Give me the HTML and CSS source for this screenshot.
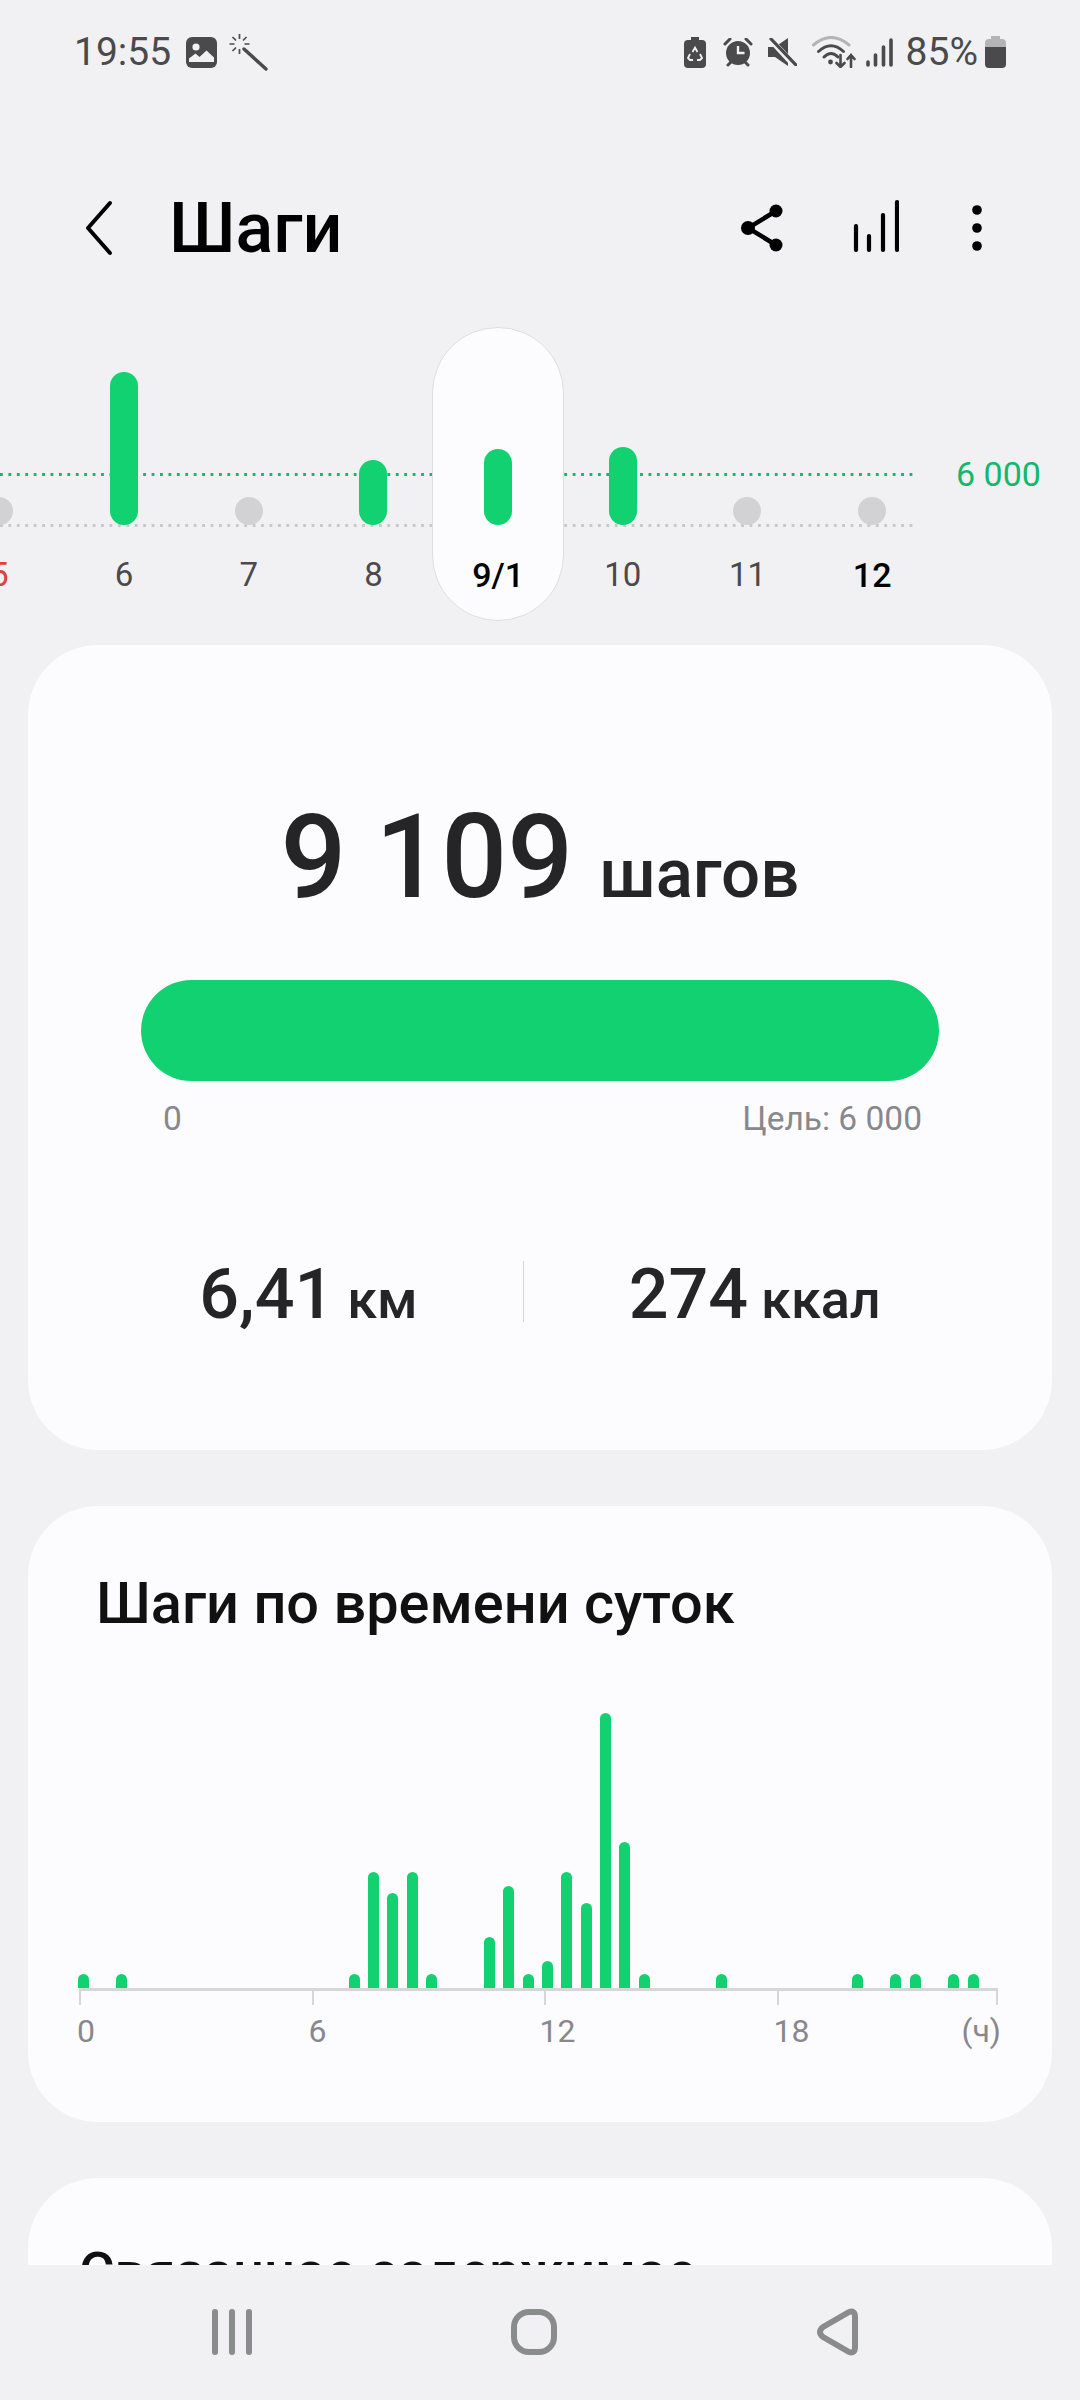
FILE: index.html
```html
<!DOCTYPE html>
<html lang="ru">
<head>
  <meta charset="UTF-8">
  <meta name="viewport" content="width=device-width, initial-scale=1.0">
  <title>Шаги</title>
  <link rel="stylesheet" href="styles.css">
</head>
<body>
  <div class="page">
    <!-- Status bar -->
    <div class="status">
      <div class="status-left">
        <span class="clock">19:55</span>
        <svg class="ic-image" width="31" height="31" viewBox="0 0 31 31">
          <rect width="31" height="31" rx="6" fill="#4a4a4c"/>
          <circle cx="10" cy="10" r="3.6" fill="#f1f1f3"/>
          <path d="M3 25v-3.500l6.500-5 4 3.500 7-6.500 7.500 7v4.500z" fill="#f1f1f3"/>
        </svg>
        <svg class="ic-wand" width="39" height="39" viewBox="0 0 39 39" fill="none" stroke="#4a4a4c">
          <path d="M15 16l22 20" stroke-width="3.400" stroke-linecap="round"/>
          <path d="M10.500 1v5M10.500 16v5M0.500 11h5M15.500 11h5M3.500 4l3.500 3.500M3.500 18l3.500-3.500M17.500 4l-3.500 3.500" stroke-width="1.700"/>
        </svg>
      </div>
      <div class="status-right">
        <svg class="ic-recycle" width="22" height="31" viewBox="0 0 22 31">
          <path d="M7 0h8v3h3a4 4 0 0 1 4 4v20a4 4 0 0 1-4 4H4a4 4 0 0 1-4-4V7a4 4 0 0 1 4-4h3z" fill="#4a4a4c"/>
          <path d="M8.500 15l2.500-4.500 2.500 4.500M16 17l2 4-2 2h-3M9 23H6l-2-2 2-4" fill="none" stroke="#f1f1f3" stroke-width="1.800"/>
        </svg>
        <svg class="ic-alarm" width="30" height="29" viewBox="0 0 30 29">
          <circle cx="15" cy="15" r="12" fill="#4a4a4c"/>
          <path d="M2 6l5-5M28 6l-5-5M5 27l3-3M25 27l-3-3" stroke="#4a4a4c" stroke-width="3" stroke-linecap="round"/>
          <path d="M15 8v7h6.500" fill="none" stroke="#f1f1f3" stroke-width="2.400"/>
        </svg>
        <svg class="ic-mute" width="29" height="28" viewBox="0 0 29 28">
          <path d="M0 9h7l13-9v28L7 19H0z" fill="#4a4a4c"/>
          <path d="M1 0l26 28" stroke="#f1f1f3" stroke-width="6"/>
          <path d="M3 1l25 26" stroke="#4a4a4c" stroke-width="3.200" stroke-linecap="round"/>
        </svg>
        <svg class="ic-wifi" width="44" height="32" viewBox="0 0 44 32" fill="none" stroke-linecap="round">
          <path d="M1.500 9Q19 -6 37 9" stroke="#b4b4b6" stroke-width="3"/>
          <path d="M6.500 15.500Q19 4 31.500 15.500M12 21Q19 14 26 21" stroke="#4a4a4c" stroke-width="3"/>
          <circle cx="18.500" cy="26" r="2.400" fill="#4a4a4c"/>
          <path d="M28.500 19v12M24.500 27l4 4 4-4M39 31V19M35.500 23l3.500-4 3.500 4" stroke="#4a4a4c" stroke-width="2.600"/>
        </svg>
        <svg class="ic-signal" width="27" height="29" viewBox="0 0 27 29" fill="none" stroke="#4a4a4c" stroke-width="3.600" stroke-linecap="round">
          <path d="M2 24v3M9.500 17v10M17.500 9v18M25 2v25"/>
        </svg>
        <span class="percent">85%</span>
        <svg class="ic-battery" width="21" height="32" viewBox="0 0 21 32">
          <path d="M6 0h9v3h2a4 4 0 0 1 4 4v4H0V7a4 4 0 0 1 4-4h2z" fill="#b4b4b6"/>
          <path d="M0 11h21v17a4 4 0 0 1-4 4H4a4 4 0 0 1-4-4z" fill="#4a4a4c"/>
        </svg>
      </div>
    </div>

    <!-- App bar -->
    <div class="appbar">
      <svg class="ic-back" width="30" height="56" viewBox="0 0 30 56" fill="none" stroke="#000" stroke-width="4" stroke-linecap="round" stroke-linejoin="round">
        <path d="M26 3L4 28l22 25"/>
      </svg>
      <h1 class="title">Шаги</h1>
      <svg class="ic-share" width="44" height="48" viewBox="0 0 44 48">
        <path d="M36 7L8 24l28 17" fill="none" stroke="#000" stroke-width="4.500"/>
        <circle cx="36" cy="7" r="6.500"/><circle cx="8" cy="24" r="7"/><circle cx="36" cy="41" r="6.500"/>
      </svg>
      <svg class="ic-bars" width="46" height="54" viewBox="0 0 46 54" fill="none" stroke="#000" stroke-width="4.200" stroke-linecap="round">
        <path d="M3 27v24M16 37v14M30 16v35M44 3v48"/>
      </svg>
      <svg class="ic-more" width="12" height="48" viewBox="0 0 12 48">
        <circle cx="6" cy="6" r="4.800"/><circle cx="6" cy="24" r="4.800"/><circle cx="6" cy="42" r="4.800"/>
      </svg>
    </div>

    <div class="content">
      <!-- Day strip -->
      <div class="days">
        <div class="line line-goal"></div>
        <div class="line line-base"></div>
        <div class="day-pill"></div>
        <span class="goal-label">6 000</span>
        <div class="day-cols">
          <div class="day"><div class="day-plot"><i class="dot"></i></div><span class="day-num sunday">5</span></div>
          <div class="day"><div class="day-plot"><i class="bar" style="height:153px"></i></div><span class="day-num">6</span></div>
          <div class="day"><div class="day-plot"><i class="dot"></i></div><span class="day-num">7</span></div>
          <div class="day"><div class="day-plot"><i class="bar" style="height:65px"></i></div><span class="day-num">8</span></div>
          <div class="day"><div class="day-plot"><i class="bar" style="height:76px"></i></div><span class="day-num strong">9/1</span></div>
          <div class="day"><div class="day-plot"><i class="bar" style="height:78px"></i></div><span class="day-num">10</span></div>
          <div class="day"><div class="day-plot"><i class="dot"></i></div><span class="day-num">11</span></div>
          <div class="day"><div class="day-plot"><i class="dot"></i></div><span class="day-num strong">12</span></div>
        </div>
      </div>

      <!-- Summary -->
      <section class="card card-summary">
        <div class="total"><span class="total-num">9 109</span><span class="total-unit">шагов</span></div>
        <div class="progress"></div>
        <div class="progress-labels"><span>0</span><span>Цель: 6 000</span></div>
        <div class="stats">
          <div class="stat"><b>6,41</b><span>км</span></div>
          <div class="stats-sep"></div>
          <div class="stat"><b>274</b><span>ккал</span></div>
        </div>
      </section>

      <!-- Hourly chart -->
      <section class="card card-hours">
        <h2 class="card-title">Шаги по времени суток</h2>
        <div class="hours">
          <i style="grid-column:1;height:14px"></i>
          <i style="grid-column:3;height:14px"></i>
          <i style="grid-column:15;height:14px"></i>
          <i style="grid-column:16;height:116px"></i>
          <i style="grid-column:17;height:95px"></i>
          <i style="grid-column:18;height:116px"></i>
          <i style="grid-column:19;height:14px"></i>
          <i style="grid-column:22;height:51px"></i>
          <i style="grid-column:23;height:102px"></i>
          <i style="grid-column:24;height:14px"></i>
          <i style="grid-column:25;height:27px"></i>
          <i style="grid-column:26;height:116px"></i>
          <i style="grid-column:27;height:85px"></i>
          <i style="grid-column:28;height:275px"></i>
          <i style="grid-column:29;height:146px"></i>
          <i style="grid-column:30;height:14px"></i>
          <i style="grid-column:34;height:14px"></i>
          <i style="grid-column:41;height:14px"></i>
          <i style="grid-column:43;height:14px"></i>
          <i style="grid-column:44;height:14px"></i>
          <i style="grid-column:46;height:14px"></i>
          <i style="grid-column:47;height:14px"></i>
        </div>
        <div class="axis">
          <div class="ticks"><i></i><i></i><i></i><i class="tick-last"></i></div>
          <div class="axis-labels"><span>0</span><span>6</span><span>12</span><span class="axis-last"><span>18</span><span>(ч)</span></span></div>
        </div>
      </section>

      <!-- Cut off by the nav bar -->
      <section class="card card-related">
        <h2 class="card-title">Связанное содержимое</h2>
      </section>
    </div>

    <!-- Navigation bar -->
    <div class="navbar">
      <svg width="46" height="48" viewBox="0 0 46 48" fill="#8a8c8c">
        <rect x="0" y="1" width="6" height="46" rx="3"/><rect x="17" y="1" width="6" height="46" rx="3"/><rect x="34" y="1" width="6" height="46" rx="3"/>
      </svg>
      <svg class="nav-home" width="46" height="48" viewBox="0 0 46 48" fill="none" stroke="#8a8c8c" stroke-width="6">
        <rect x="3" y="4" width="40" height="40" rx="15"/>
      </svg>
      <svg width="46" height="48" viewBox="0 0 46 48" fill="none" stroke="#8a8c8c" stroke-width="6" stroke-linejoin="round">
        <path d="M35 4Q41 2 41 9V39Q41 46 35 44L9 29Q3 24 9 19Z"/>
      </svg>
    </div>
  </div>
</body>
</html>
```

FILE: styles.css
```css
/* General Page Styling */
* {
  box-sizing: border-box;
}
body {
  margin: 0;
  background: #f1f1f3;
  font-family: 'Roboto', 'Noto Sans', sans-serif;
  color: #252528;
}
.page {
  display: flex;
  flex-direction: column;
  width: 1080px;
  height: 2400px;
  overflow: hidden;
}

/* Status Bar */
.status {
  flex: none;
  display: flex;
  justify-content: space-between;
  align-items: center;
  height: 104px;
  padding: 0 74px;
  color: #4a4a4c;
}
.status-left, .status-right {
  display: flex;
  align-items: center;
}
.clock, .percent {
  font-size: 39px;
  line-height: 40px;
}
.ic-image {
  margin-left: 15px;
}
.ic-wand {
  margin-left: 12px;
}
.ic-alarm {
  margin-left: 17px;
}
.ic-mute {
  margin-left: 15px;
}
.ic-wifi {
  margin-left: 15px;
}
.ic-signal {
  margin-left: 10px;
}
.percent {
  margin-left: 13px;
}
.ic-battery {
  margin-left: 7px;
}

/* App Bar */
.appbar {
  flex: none;
  display: flex;
  align-items: center;
  height: 223px;
  padding: 74px 0 49px 84px;
}
.title {
  flex: 1;
  margin: 0 0 0 55px;
  font-size: 70px;
  font-weight: 500;
  line-height: 100px;
  color: #000;
}
.ic-share {
  margin-right: 69px;
}
.ic-bars {
  margin: -5px 72px 0 0;
}
.ic-more {
  margin-right: 97px;
}

/* Day Strip */
.content {
  flex: 1;
  min-height: 0;
  overflow: hidden;
}
.days {
  position: relative;
  height: 294px;
  margin-bottom: 24px;
}
.line {
  position: absolute;
  left: 0;
  width: 913px;
  height: 3px;
  background-size: 8.430px 3px;
}
.line-goal {
  top: 146px;
  background-image: radial-gradient(circle at 1.500px 1.500px, #12b96c 1.500px, transparent 1.800px);
}
.line-base {
  top: 197px;
  background-image: radial-gradient(circle at 1.500px 1.500px, #c8c8ca 1.500px, transparent 1.800px);
}
.day-pill {
  position: absolute;
  top: 0;
  left: 432px;
  width: 132px;
  height: 294px;
  background: #fcfcfe;
  border: 1px solid #dedee0;
  border-radius: 66px;
}
.goal-label {
  position: absolute;
  top: 127px;
  left: 956px;
  font-size: 34px;
  line-height: 40px;
  color: #12b96c;
}
.day-cols {
  position: relative;
  display: flex;
  margin-left: -63px;
}
.day {
  flex: 0 0 124.700px;
  display: flex;
  flex-direction: column;
  align-items: center;
}
.day-plot {
  display: flex;
  align-items: flex-end;
  height: 198px;
}
.bar {
  display: block;
  width: 28px;
  background: #12d170;
  border-radius: 14px;
}
.dot {
  display: block;
  width: 28px;
  height: 28px;
  background: #d2d2d4;
  border-radius: 50%;
}
.day-num {
  margin-top: 30px;
  font-size: 33px;
  line-height: 40px;
  color: #4a4a4c;
}
.day-num.strong {
  font-size: 34px;
  font-weight: 500;
  color: #000;
}
.day-num.sunday {
  color: #d9423f;
}

/* Cards */
.card {
  margin: 0 28px 56px;
  background: #fcfcfe;
  border-radius: 70px;
}
.card-title {
  margin: 0;
  font-size: 57.700px;
  font-weight: 500;
  line-height: 70px;
  color: #111;
}

/* Summary Card */
.card-summary {
  height: 805px;
  padding-top: 147px;
}
.total {
  display: flex;
  justify-content: center;
  align-items: baseline;
  gap: 26px;
  height: 130px;
  line-height: 130px;
  font-weight: 500;
}
.total-num {
  font-size: 116px;
}
.total-unit {
  font-size: 69px;
}
.progress {
  height: 101px;
  margin: 58px 113px 0;
  background: #12d170;
  border-radius: 51px;
}
.progress-labels {
  display: flex;
  justify-content: space-between;
  margin: 18px 130px 0 135px;
  font-size: 33.500px;
  line-height: 40px;
  color: #88888c;
}
.stats {
  display: flex;
  justify-content: center;
  gap: 105px;
  margin-top: 121px;
}
.stat {
  display: flex;
  align-items: baseline;
  gap: 13px;
  line-height: 68px;
  font-weight: 500;
}
.stat b {
  font-size: 70px;
  font-weight: 500;
}
.stat span {
  font-size: 54px;
}
.stats-sep {
  width: 1px;
  height: 61px;
  margin-top: 1px;
  background: #d6d6d8;
}

/* Hourly Card */
.card-hours {
  padding: 62px 0 71px;
}
.card-hours .card-title {
  padding-left: 68px;
}
.hours {
  display: grid;
  grid-template-columns: repeat(48, 19.350px);
  justify-items: center;
  align-items: end;
  height: 350px;
  margin: 0 0 0 45.600px;
}
.hours i {
  display: block;
  width: 11px;
  background: #12d170;
  border-radius: 5.500px 5.500px 0 0;
}
.axis {
  width: 919px;
  margin-left: 51px;
  border-top: 3px solid #d6d6d8;
}
.ticks {
  display: grid;
  grid-template-columns: repeat(3, 232.500px) 1fr;
}
.ticks i {
  height: 14px;
  border-left: 2px solid #d6d6d8;
}
.ticks .tick-last {
  border-right: 2px solid #d6d6d8;
}
.axis-labels {
  display: grid;
  grid-template-columns: 231.500px 231px 234px 1fr;
  margin: 6px -3px 0 -2px;
  font-size: 32px;
  line-height: 40px;
  color: #88888c;
}
.axis-last {
  display: flex;
  justify-content: space-between;
}

/* Related Card */
.card-related {
  height: 400px;
  padding: 58px 0 0 51px;
}
.card-related .card-title {
  font-size: 54.500px;
}

/* Navigation Bar */
.navbar {
  flex: none;
  display: flex;
  align-items: flex-start;
  gap: 253px;
  height: 135px;
  padding: 43px 0 0 212px;
}
.nav-home {
  margin-right: 4px;
}
```
